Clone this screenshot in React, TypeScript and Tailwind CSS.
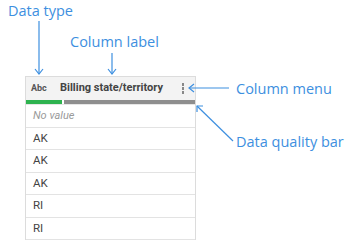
const rows = ['AK', 'AK', 'AK', 'RI', 'RI'];

function Annotations() {
  return (
    <svg className="absolute inset-0 pointer-events-none" width={349} height={241} viewBox="0 0 349 241" fill="none" stroke="#3d8fe0" strokeWidth={1.2}>
      {/* data type */}
      <line x1={39} y1={21} x2={39} y2={74} />
      <polyline points="35,69 39,74 43,69" />
      {/* column label */}
      <line x1={112} y1={53} x2={112} y2={74} />
      <polyline points="108,69 112,74 116,69" />
      {/* column menu */}
      <line x1={229} y1={88} x2={189} y2={88} />
      <polyline points="194,84 189,88 194,92" />
      {/* data quality bar */}
      <line x1={233} y1={141} x2={197} y2={106} />
      <polyline points="197,112 197,106 203,106" />
    </svg>
  );
}

export default function App() {
  return (
    <div className="relative w-[349px] h-[241px] bg-white overflow-hidden" style={{ fontFamily: '"Open Sans", "Liberation Sans", sans-serif' }}>
      <div className="absolute left-[8px] top-[0px] text-[14.5px] text-[#3d8fe0]">Data type</div>
      <div className="absolute left-[70px] top-[31px] text-[14.5px] text-[#3d8fe0]">Column label</div>
      <div className="absolute left-[236px] top-[78px] text-[14.5px] text-[#3d8fe0]">Column menu</div>
      <div className="absolute left-[236px] top-[131px] text-[14.5px] text-[#3d8fe0]">Data quality bar</div>

      <div className="pt-[76px] pl-[25px]">
        <div className="w-[171px] border border-[#dcdcdc] border-b-0" style={{ fontFamily: 'Roboto, "Liberation Sans", sans-serif' }}>
          <div className="h-[23px] bg-[#f3f3f3] flex items-center pl-[5px] pr-[11px]">
            <span className="text-[9px] font-bold text-[#555] w-[29px]">Abc</span>
            <span className="text-[11px] font-bold text-[#444] flex-1">Billing state/territory</span>
            <span className="flex flex-col gap-[1.5px]">
              <span className="w-[2px] h-[2.5px] bg-[#888]" />
              <span className="w-[2px] h-[2.5px] bg-[#888]" />
              <span className="w-[2px] h-[2.5px] bg-[#888]" />
            </span>
          </div>
          <div className="h-[5px] flex gap-[2px] border-b border-[#e6e6e6] bg-white">
            <div className="w-[36px] bg-[#2eb34f]" />
            <div className="flex-1 bg-[#8e8e8e]" />
          </div>
          <div className="h-[22.5px] flex items-center pl-[7px] border-b border-[#e3e3e3] text-[11px] italic text-[#9a9a9a]">No value</div>
          {rows.map((r, i) => (
            <div key={i} className="h-[22.5px] flex items-center pl-[7px] border-b border-[#e3e3e3] text-[11.5px] text-[#444]">{r}</div>
          ))}
        </div>
      </div>
      <Annotations />
    </div>
  );
}
